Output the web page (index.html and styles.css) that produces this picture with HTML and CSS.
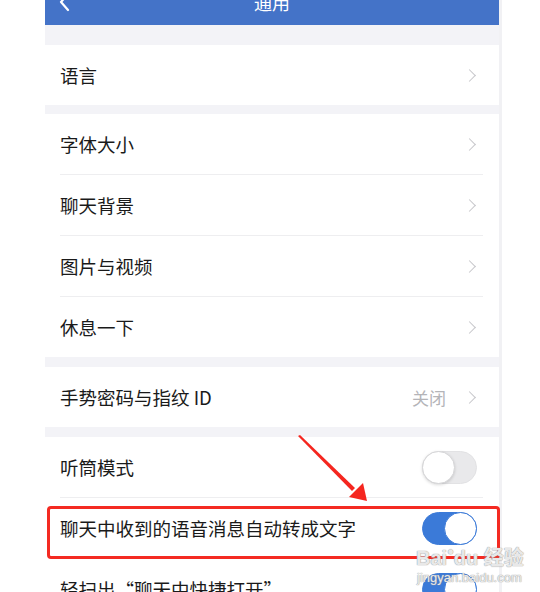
FILE: index.html
```html
<!DOCTYPE html>
<html lang="zh-CN">
<head>
  <meta charset="UTF-8" />
  <meta name="viewport" content="width=device-width, initial-scale=1.0"/>
  <title>通用</title>
  <link rel="stylesheet" href="styles.css">
</head>
<body>
  <div class="page">
    <div class="phone">
      <div class="topbar">
        <svg class="back" width="12" height="14" viewBox="0 0 12 14"><path d="M9 -6 L2 2 L9 10" fill="none" stroke="#fff" stroke-width="2.2" stroke-linecap="round" stroke-linejoin="round"/></svg>
        <div class="title">通用</div>
        <div></div>
      </div>

      <div class="group first">
        <div class="item"><span class="label">语言</span><span class="chev"></span></div>
      </div>

      <div class="group">
        <div class="item"><span class="label">字体大小</span><span class="chev"></span></div>
        <div class="item"><span class="label">聊天背景</span><span class="chev"></span></div>
        <div class="item"><span class="label">图片与视频</span><span class="chev"></span></div>
        <div class="item"><span class="label">休息一下</span><span class="chev"></span></div>
      </div>

      <div class="group">
        <div class="item"><span class="label">手势密码与指纹 ID</span><span class="value">关闭</span><span class="chev"></span></div>
      </div>

      <div class="group">
        <div class="item"><span class="label">听筒模式</span><span class="switch"></span></div>
        <div class="item"><span class="label">聊天中收到的语音消息自动转成文字</span><span class="switch on"></span></div>
        <div class="item"><span class="label">轻扫出“聊天中快捷打开”</span><span class="switch on"></span></div>
      </div>
    </div>

    <!-- 标注 -->
    <div class="mark-box"></div>
    <svg class="mark-arrow" width="80" height="75" viewBox="0 0 80 75">
      <polygon points="2,1 4,0 59,53 56,56" fill="#f5261f"/>
      <polygon points="71,66 53,62 67,48" fill="#f5261f"/>
    </svg>
    <div class="watermark">
      <div class="wm-logo">Bai<span class="paw">●</span>du 经验</div>
      <div class="wm-url">jingyan.baidu.com</div>
    </div>
  </div>
</body>
</html>
```

FILE: styles.css
```css
body {
  margin: 0;
  background-color: #fff;
  font-family: "Noto Sans CJK SC", "Noto Sans", sans-serif;
}
.page {
  position: relative;
  width: 540px;
  height: 592px;
  overflow: hidden;
}
.phone {
  width: 454px;
  height: 592px;
  margin-left: 45px;
  background-color: #f3f3f7;
  border-right: 3px solid #f1f1f4;
  overflow: hidden;
}
.topbar {
  height: 25px;
  background-color: #4473c8;
  display: grid;
  grid-template-columns: 1fr auto 1fr;
  align-items: start;
  margin-bottom: 20px;
}
.back {
  margin-left: 14px;
}
.title {
  color: #fff;
  font-size: 18px;
  line-height: 18px;
  margin-top: -7px;
}
.group {
  background-color: #fff;
  margin-bottom: 10px;
}
.group.first {
  margin-bottom: 9px;
}
.item {
  display: flex;
  align-items: center;
  height: 60px;
  margin: 0 16px 0 15px;
  border-bottom: 1px solid #eeeef0;
}
.item:last-child {
  border-bottom: none;
}
.label {
  flex: 1;
  font-size: 18.5px;
  color: #1a1a1a;
  white-space: nowrap;
}
.value {
  font-size: 17px;
  color: #b4b4b8;
  margin-right: 19px;
}
.chev {
  width: 8px;
  height: 8px;
  border-top: 1.6px solid #c6c6ca;
  border-right: 1.6px solid #c6c6ca;
  transform: rotate(45deg);
  margin-right: 9px;
}
.switch {
  position: relative;
  width: 53px;
  height: 31px;
  border: 1px solid #e2e2e4;
  border-radius: 17px;
  background-color: #e9e9eb;
  margin-right: 6px;
  flex-shrink: 0;
}
.switch::after {
  content: "";
  position: absolute;
  left: -1px;
  top: -1px;
  width: 31px;
  height: 31px;
  border-radius: 50%;
  background-color: #fff;
  border: 1px solid #d6d6d8;
  box-shadow: 0 1px 3px rgba(0, 0, 0, 0.15);
}
.switch.on {
  background-color: #3b7ad8;
  border-color: #3b7ad8;
}
.switch.on::after {
  left: auto;
  right: -1px;
  border-color: #3b7ad8;
  box-shadow: none;
}
.mark-box {
  position: absolute;
  left: 47px;
  top: 506px;
  width: 447px;
  height: 47px;
  border: 3px solid #f42a22;
  border-radius: 4px;
}
.mark-arrow {
  position: absolute;
  left: 296px;
  top: 435px;
}
.watermark {
  position: absolute;
  left: 416px;
  top: 539px;
  white-space: nowrap;
  color: rgba(255, 255, 255, 0.8);
  text-shadow: 0 0 1px #9a9a9a, 0 0 1px #9a9a9a;
}
.wm-logo {
  font-family: "Liberation Sans", "Noto Sans CJK SC", sans-serif;
  font-size: 20px;
  font-weight: bold;
  line-height: 24px;
}
.paw {
  font-size: 11px;
  vertical-align: 10px;
}
.wm-url {
  font-family: "Liberation Sans", sans-serif;
  font-size: 13px;
  line-height: 16px;
  margin-left: 1px;
}
```
